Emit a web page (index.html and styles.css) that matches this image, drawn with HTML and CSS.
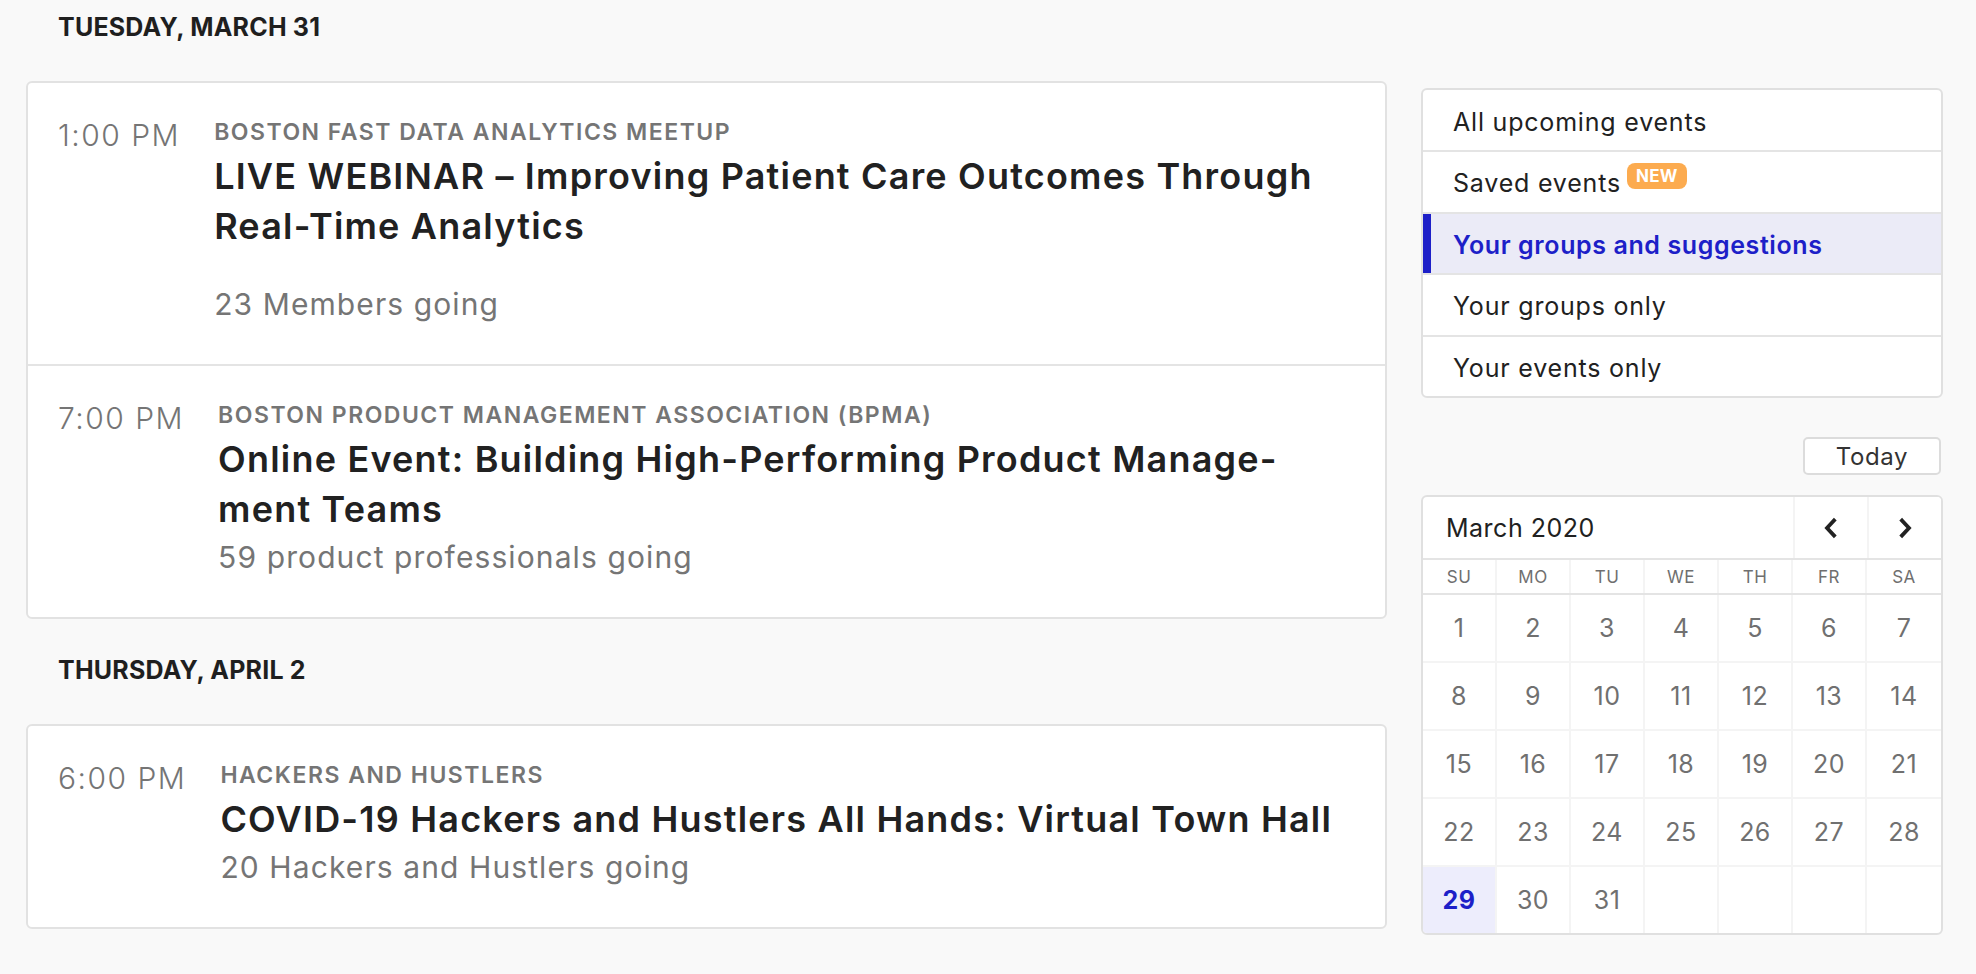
FILE: index.html
```html
<!DOCTYPE html>
<html lang="en">
<head>
<meta charset="utf-8">
<title>Events</title>
<link rel="stylesheet" href="styles.css">
</head>
<body>
<div class="page">
  <main class="feed">
    <section class="day">
      <h2 class="day-heading">TUESDAY, MARCH 31</h2>
      <div class="card">
        <article class="event">
          <div class="event-time">1:00 PM</div>
          <div class="event-body">
            <div class="event-group">BOSTON FAST DATA ANALYTICS MEETUP</div>
            <h3 class="event-title">LIVE WEBINAR – Improving Patient Care Outcomes Through<br>Real-Time Analytics</h3>
            <div class="event-going event-going--spaced">23 Members going</div>
          </div>
        </article>
        <article class="event">
          <div class="event-time">7:00 PM</div>
          <div class="event-body">
            <div class="event-group">BOSTON PRODUCT MANAGEMENT ASSOCIATION (BPMA)</div>
            <h3 class="event-title">Online Event: Building High-Performing Product Manage-<br>ment Teams</h3>
            <div class="event-going">59 product professionals going</div>
          </div>
        </article>
      </div>
    </section>
    <section class="day">
      <h2 class="day-heading">THURSDAY, APRIL 2</h2>
      <div class="card">
        <article class="event">
          <div class="event-time">6:00 PM</div>
          <div class="event-body">
            <div class="event-group">HACKERS AND HUSTLERS</div>
            <h3 class="event-title">COVID-19 Hackers and Hustlers All Hands: Virtual Town Hall</h3>
            <div class="event-going">20 Hackers and Hustlers going</div>
          </div>
        </article>
      </div>
    </section>
  </main>

  <aside class="sidebar">
    <ul class="filters">
      <li class="filter">All upcoming events</li>
      <li class="filter">Saved events <span class="badge">NEW</span></li>
      <li class="filter filter--active">Your groups and suggestions</li>
      <li class="filter">Your groups only</li>
      <li class="filter">Your events only</li>
    </ul>

    <div class="today-row"><button class="today-btn">Today</button></div>

    <div class="calendar">
      <div class="cal-header">
        <div class="cal-title">March 2020</div>
        <button class="cal-nav" aria-label="Previous month">
          <svg width="16" height="22" viewBox="0 0 16 22"><polyline points="11,3.5 4,11 11,18.5" fill="none" stroke="#222" stroke-width="3.8" stroke-linecap="square" stroke-linejoin="miter"/></svg>
        </button>
        <button class="cal-nav" aria-label="Next month">
          <svg width="16" height="22" viewBox="0 0 16 22"><polyline points="5,3.5 12,11 5,18.5" fill="none" stroke="#222" stroke-width="3.8" stroke-linecap="square" stroke-linejoin="miter"/></svg>
        </button>
      </div>
      <div class="cal-weekdays">
        <div class="wd">SU</div><div class="wd">MO</div><div class="wd">TU</div><div class="wd">WE</div><div class="wd">TH</div><div class="wd">FR</div><div class="wd">SA</div>
      </div>
      <div class="cal-days">
        <div class="day-cell">1</div><div class="day-cell">2</div><div class="day-cell">3</div><div class="day-cell">4</div><div class="day-cell">5</div><div class="day-cell">6</div><div class="day-cell">7</div>
        <div class="day-cell">8</div><div class="day-cell">9</div><div class="day-cell">10</div><div class="day-cell">11</div><div class="day-cell">12</div><div class="day-cell">13</div><div class="day-cell">14</div>
        <div class="day-cell">15</div><div class="day-cell">16</div><div class="day-cell">17</div><div class="day-cell">18</div><div class="day-cell">19</div><div class="day-cell">20</div><div class="day-cell">21</div>
        <div class="day-cell">22</div><div class="day-cell">23</div><div class="day-cell">24</div><div class="day-cell">25</div><div class="day-cell">26</div><div class="day-cell">27</div><div class="day-cell">28</div>
        <div class="day-cell day-cell--today">29</div><div class="day-cell">30</div><div class="day-cell">31</div><div class="day-cell"></div><div class="day-cell"></div><div class="day-cell"></div><div class="day-cell"></div>
      </div>
    </div>
  </aside>
</div>
</body>
</html>
```

FILE: styles.css
```css
* { box-sizing: border-box; }

body {
  margin: 0;
  background: #f9f9f9;
  font-family: Inter, "Noto Sans", sans-serif;
  color: #212121;
}

.page {
  display: grid;
  grid-template-columns: 1361px 522px;
  column-gap: 34px;
  padding: 0 33px 0 26px;
}

/* ---------- feed ---------- */
.day + .day { margin-top: 24px; }

.day-heading {
  margin: 0 0 40px;
  padding: 13px 0 0 32px;
  font-size: 25px;
  line-height: 28px;
  font-weight: 700;
  letter-spacing: 0.2px;
  color: #1f1f1f;
}

.card {
  background: #fff;
  border: 2px solid #e2e2e2;
  border-radius: 6px;
}

.event {
  display: flex;
  align-items: flex-start;
  gap: 34px;
  padding: 34px 30px 40px;
}

.event + .event { border-top: 2px solid #e4e4e4; }

.event-time {
  flex: none;
  font-size: 30px;
  line-height: 36px;
  font-weight: 300;
  letter-spacing: 1.5px;
  color: #757575;
  white-space: nowrap;
}

.event-body { min-width: 0; }

.event-group {
  font-size: 23px;
  line-height: 30px;
  font-weight: 600;
  color: #757575;
  letter-spacing: 1.5px;
}

.event-title {
  margin: 4px 0 0;
  font-size: 36px;
  line-height: 50px;
  font-weight: 600;
  letter-spacing: 1.2px;
  color: #212121;
  white-space: nowrap;
}

.event-going {
  margin-top: 3px;
  font-size: 30px;
  line-height: 40px;
  font-weight: 400;
  letter-spacing: 1.1px;
  color: #757575;
}

.event-going--spaced { margin-top: 33px; }

/* ---------- sidebar ---------- */
.sidebar { padding-top: 88px; }

.filters {
  list-style: none;
  margin: 0;
  padding: 0;
  background: #fff;
  border: 2px solid #e0e0e0;
  border-radius: 6px;
  overflow: hidden;
}

.filter {
  height: 60px;
  display: flex;
  align-items: center;
  padding: 3px 0 0 30px;
  font-size: 25px;
  font-weight: 400;
  letter-spacing: 0.8px;
  color: #212121;
}

.filter + .filter { border-top: 2px solid #e4e4e4; height: 61.5px; }

.filter--active {
  background: #ebebf7;
  box-shadow: inset 8px 0 0 #1d1fc8;
  color: #1d1fc8;
  font-weight: 600;
  letter-spacing: 0.6px;
}

.badge {
  display: inline-block;
  margin-left: 6px;
  padding: 0 9px;
  height: 26px;
  line-height: 26px;
  border-radius: 8px;
  background: #fcab4f;
  color: #fff;
  font-size: 17px;
  font-weight: 700;
  letter-spacing: 0.3px;
  position: relative;
  top: -7px;
}

.today-row {
  display: flex;
  justify-content: flex-end;
  margin-top: 39px;
  padding-right: 2px;
}

.today-btn {
  width: 138px;
  height: 38px;
  background: #fff;
  border: 2px solid #dcdcdc;
  border-radius: 5px;
  font-family: inherit;
  font-size: 24px;
  letter-spacing: 0.6px;
  color: #333;
  padding: 0;
}

.calendar {
  margin-top: 20px;
  background: #fff;
  border: 2px solid #e0e0e0;
  border-radius: 6px;
  overflow: hidden;
}

.cal-header {
  display: flex;
  height: 63px;
  border-bottom: 2px solid #e4e4e4;
}

.cal-title {
  flex: 1;
  display: flex;
  align-items: center;
  padding-left: 23px;
  font-size: 25px;
  letter-spacing: 0.5px;
  color: #212121;
}

.cal-nav {
  width: 74px;
  height: 100%;
  border: none;
  border-left: 2px solid #f4f4f4;
  background: #fff;
  display: flex;
  align-items: center;
  justify-content: center;
  padding: 0;
}

.cal-weekdays,
.cal-days {
  display: grid;
  grid-template-columns: repeat(7, 1fr);
}

.cal-weekdays { border-bottom: 2px solid #e4e4e4; }

.wd {
  height: 33px;
  display: flex;
  align-items: center;
  justify-content: center;
  font-size: 17px;
  letter-spacing: 0.5px;
  color: #6f6f6f;
  border-right: 2px solid #f4f4f4;
}

.wd:nth-child(7n) { border-right: none; }

.day-cell {
  height: 68px;
  display: flex;
  align-items: center;
  justify-content: center;
  font-size: 25px;
  letter-spacing: 0.5px;
  color: #707070;
  border-right: 2px solid #f4f4f4;
  border-bottom: 2px solid #f4f4f4;
}

.day-cell:nth-child(7n) { border-right: none; }
.day-cell:nth-last-child(-n+7) { border-bottom: none; height: 66px; }

.day-cell--today {
  background: #ededfc;
  color: #1d1fc8;
  font-weight: 700;
}
```
